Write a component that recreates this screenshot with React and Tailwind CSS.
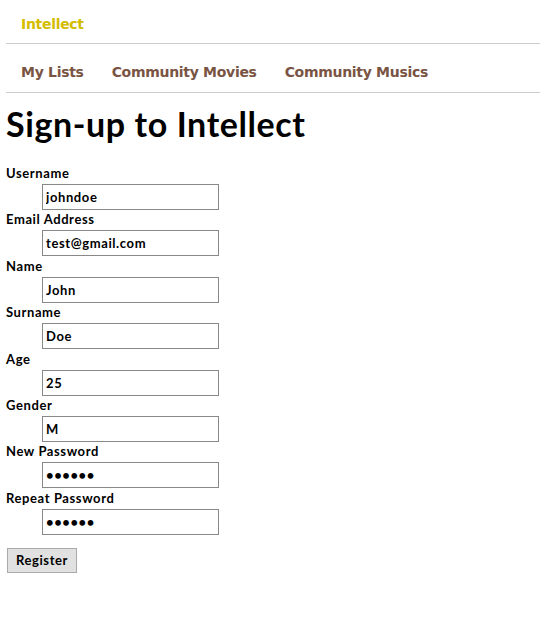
const fields = [
  { label: 'Username', type: 'text', value: 'johndoe' },
  { label: 'Email Address', type: 'text', value: 'test@gmail.com' },
  { label: 'Name', type: 'text', value: 'John' },
  { label: 'Surname', type: 'text', value: 'Doe' },
  { label: 'Age', type: 'text', value: '25' },
  { label: 'Gender', type: 'text', value: 'M' },
  { label: 'New Password', type: 'password', value: '123456' },
  { label: 'Repeat Password', type: 'password', value: '123456' },
];

function App() {
  return (
    <div className="min-h-[618px] w-full bg-white pl-[6px] text-black">
      <header className="h-[44px] border-b border-[#cccccc] pl-[15px] pt-[15px]">
        <span className="block font-['DejaVu_Sans',sans-serif] text-[14px] leading-[18px] font-bold text-[#d4bc00] tracking-[-0.3px]">
          Intellect
        </span>
      </header>
      <nav className="h-[49px] border-b border-[#cccccc] pl-[15px] pt-[19px] flex items-start gap-[28px] font-['DejaVu_Sans',sans-serif] text-[14px] leading-[18px] font-bold text-[#7a5443] tracking-[-0.3px]">
        <a href="#">My Lists</a>
        <a href="#">Community Movies</a>
        <a href="#">Community Musics</a>
      </nav>

      <div className="font-['Lato',sans-serif]">
        <h1 className="mt-[11px] text-[34px] leading-[40px] font-bold tracking-[0.6px]">Sign-up to Intellect</h1>

        <form className="mt-[20px]" onSubmit={(e) => e.preventDefault()}>
          {fields.map((f) => (
            <div key={f.label} className="mb-[0.4px]">
              <label className="block pb-[2px] text-[13px] font-bold leading-[18px] tracking-[0.6px]">{f.label}</label>
              <input
                type={f.type}
                defaultValue={f.value}
                className="ml-[36px] block h-[26px] w-[177px] border border-[#888888] px-[3px] text-[13px] font-bold tracking-[0.6px] outline-none"
              />
            </div>
          ))}

          <button
            type="submit"
            className="mt-[13px] ml-px h-[25px] w-[70px] border border-[#aaaaaa] bg-[#e1e1e1] text-[13px] font-bold tracking-[0.6px]"
          >
            Register
          </button>
        </form>
      </div>
    </div>
  );
}

export default App;
